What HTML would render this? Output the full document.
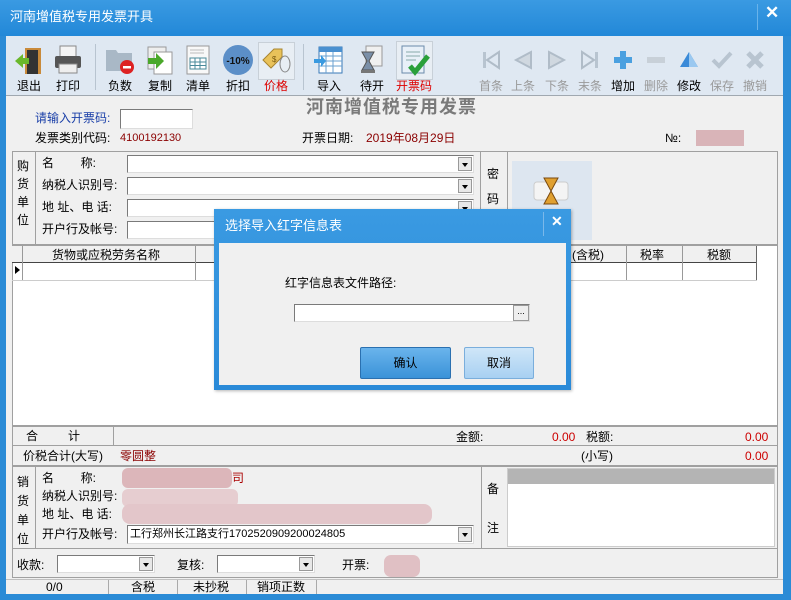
<!DOCTYPE html>
<html><head><meta charset="utf-8"><style>
*{margin:0;padding:0;box-sizing:border-box}
body{width:791px;height:600px;overflow:hidden;background:#2b8bd6;font-family:"Liberation Sans","Noto Sans CJK SC",sans-serif;font-size:12px;color:#000;position:relative}
.a{position:absolute}
.t{position:absolute;white-space:nowrap;line-height:14px}
.tb{position:absolute;top:80px;width:40px;text-align:center;font-size:12px;line-height:12px}
.ic{position:absolute;top:44px;width:32px;height:32px}
.inp{position:absolute;background:#fff;border:1px solid #7a7a7a;border-right-color:#ddd;border-bottom-color:#ddd}
.dd{position:absolute;right:1px;top:1px;width:14px;bottom:1px;background:#e8e8e8;border:1px solid #999}
.dd:after{content:"";position:absolute;left:3px;top:5px;border:3px solid transparent;border-top:4px solid #000}
.g{color:#999}
.red{color:#8b0000}
</style></head><body>
<!-- title bar -->
<div class="a" style="left:0;top:0;width:791px;height:36px;background:linear-gradient(#3a9ae2,#2288d8)"></div>
<div class="t" style="left:10px;top:10px;color:#fff;font-size:13px">河南增值税专用发票开具</div>
<div class="a" style="left:757px;top:4px;width:1px;height:26px;background:#6ab3ea"></div>
<div class="t" style="left:765px;top:6px;color:#fff;font-size:17px;font-weight:bold">✕</div>
<!-- content -->
<div class="a" style="left:6px;top:36px;width:777px;height:558px;background:#f0f0f0"></div>
<div class="a" style="left:6px;top:36px;width:777px;height:60px;background:#dfe8f2;border-bottom:1px solid #a0a8b0"></div>
<div class="a" style="left:95px;top:44px;width:1px;height:46px;background:#b8c4d0"></div>
<div class="a" style="left:303px;top:44px;width:1px;height:46px;background:#b8c4d0"></div>
<!-- icons -->
<svg class="ic" style="left:13px" viewBox="0 0 32 32"><rect x="12" y="4" width="16" height="26" fill="#c98a3a"/><rect x="14" y="6" width="11" height="24" fill="#333"/><path d="M2 17 L10 10 V14 H16 V20 H10 V24Z" fill="#6ab82c"/></svg>
<svg class="ic" style="left:52px" viewBox="0 0 32 32"><rect x="8" y="2" width="16" height="12" fill="#f4f4f4" stroke="#888"/><rect x="3" y="12" width="26" height="12" rx="2" fill="#555"/><rect x="7" y="20" width="18" height="9" fill="#eee" stroke="#888"/></svg>
<svg class="ic" style="left:104px" viewBox="0 0 32 32"><path d="M2 6 H12 L14 9 H28 V27 H2Z" fill="#a9b8c6"/><circle cx="23" cy="23" r="7" fill="#d22"/><rect x="19" y="22" width="8" height="2.5" fill="#fff"/></svg>
<svg class="ic" style="left:144px" viewBox="0 0 32 32"><rect x="4" y="3" width="18" height="22" fill="#eee" stroke="#999"/><rect x="10" y="8" width="18" height="22" fill="#fff" stroke="#999"/><path d="M4 14 H12 V9 L20 17 L12 25 V20 H4Z" fill="#4aa82a"/></svg>
<svg class="ic" style="left:182px" viewBox="0 0 32 32"><rect x="5" y="2" width="22" height="28" fill="#f8f8f8" stroke="#999"/><rect x="8" y="14" width="16" height="11" fill="#fff" stroke="#4a8a9a"/><path d="M8 18H24M8 21.5H24M13 14V25M18 14V25" stroke="#4a8a9a"/><path d="M8 6H22M8 9H22" stroke="#bbb"/></svg>
<svg class="ic" style="left:222px" viewBox="0 0 32 32"><circle cx="16" cy="16" r="15" fill="#5c8fc8"/><text x="16" y="20" font-size="10" font-weight="bold" text-anchor="middle" fill="#111" font-family="Liberation Sans">-10%</text></svg>
<div class="a" style="left:258px;top:42px;width:37px;height:38px;background:#e8eef4;border:1px solid #c8d0d8"></div>
<svg class="ic" style="left:260px" viewBox="0 0 32 32"><path d="M3 16 L14 5 H22 V13 L11 24Z" fill="#e9c25a" stroke="#a88530"/><ellipse cx="25" cy="20" rx="5" ry="8" fill="none" stroke="#888"/><text x="12" y="18" font-size="8" fill="#7a5a10">$</text></svg>
<svg class="ic" style="left:313px" viewBox="0 0 32 32"><rect x="6" y="3" width="23" height="26" fill="#fff" stroke="#3a7ab8"/><rect x="6" y="3" width="23" height="5" fill="#4a90d0"/><path d="M6 12H29M6 17H29M6 22H29M13 8V29M20 8V29" stroke="#6aa0d0"/><path d="M1 15 H8 V11 L13 17 L8 23 V19 H1Z" fill="#3a9ae0"/></svg>
<svg class="ic" style="left:356px" viewBox="0 0 32 32"><rect x="10" y="2" width="16" height="20" fill="#f0f0f0" stroke="#999"/><path d="M6 8 H18 L13 17 L18 26 H6 L11 17Z" fill="#7a8fa8" stroke="#555"/><rect x="5" y="26" width="14" height="3" fill="#777"/></svg>
<div class="a" style="left:396px;top:41px;width:37px;height:39px;background:#e8eef4;border:1px solid #c8d0d8"></div>
<svg class="ic" style="left:398px" viewBox="0 0 32 32"><rect x="4" y="2" width="22" height="27" fill="#e8f0f8" stroke="#6a8aaa"/><path d="M8 8H22M8 12H22M8 16H18" stroke="#8aa"/><path d="M12 22 L17 28 L30 12" stroke="#2aa03a" stroke-width="5" fill="none"/></svg>
<!-- right icons -->
<svg class="ic" style="left:481px;top:50px;width:20px;height:20px" viewBox="0 0 20 20"><rect x="2" y="2" width="3" height="16" fill="#b8c4d0"/><path d="M18 2 L6 10 L18 18Z" fill="none" stroke="#b0bcc8" stroke-width="2"/></svg>
<svg class="ic" style="left:513px;top:50px;width:20px;height:20px" viewBox="0 0 20 20"><path d="M18 2 L3 10 L18 18Z" fill="#d0d8e0" stroke="#b0bcc8" stroke-width="2"/></svg>
<svg class="ic" style="left:547px;top:50px;width:20px;height:20px" viewBox="0 0 20 20"><path d="M2 2 L17 10 L2 18Z" fill="#d0d8e0" stroke="#b0bcc8" stroke-width="2"/></svg>
<svg class="ic" style="left:580px;top:50px;width:20px;height:20px" viewBox="0 0 20 20"><rect x="15" y="2" width="3" height="16" fill="#b8c4d0"/><path d="M2 2 L14 10 L2 18Z" fill="none" stroke="#b0bcc8" stroke-width="2"/></svg>
<svg class="ic" style="left:613px;top:50px;width:20px;height:20px" viewBox="0 0 20 20"><path d="M7 1H13V7H19V13H13V19H7V13H1V7H7Z" fill="#4aa0e0"/></svg>
<svg class="ic" style="left:646px;top:50px;width:20px;height:20px" viewBox="0 0 20 20"><rect x="1" y="7" width="18" height="6" fill="#c8d0d8"/></svg>
<svg class="ic" style="left:679px;top:50px;width:20px;height:20px" viewBox="0 0 20 20"><path d="M10 2 L19 17 H1Z" fill="#3a8ad8"/><path d="M10 2 L19 17 H10Z" fill="#9ac8f0"/></svg>
<svg class="ic" style="left:711px;top:50px;width:22px;height:20px" viewBox="0 0 22 20"><path d="M2 10 L8 16 L20 3" stroke="#b8c4d0" stroke-width="4" fill="none"/></svg>
<svg class="ic" style="left:745px;top:50px;width:20px;height:20px" viewBox="0 0 20 20"><path d="M3 3L17 17M17 3L3 17" stroke="#b8c4d0" stroke-width="5"/></svg>
<div class="tb" style="left:9px">退出</div><div class="tb" style="left:48px">打印</div>
<div class="tb" style="left:100px">负数</div><div class="tb" style="left:140px">复制</div>
<div class="tb" style="left:178px">清单</div><div class="tb" style="left:218px">折扣</div>
<div class="tb" style="left:256px;color:#d00">价格</div><div class="tb" style="left:309px">导入</div>
<div class="tb" style="left:352px">待开</div><div class="tb" style="left:390px;width:48px;color:#d00">开票码</div>
<div class="tb g" style="left:471px">首条</div><div class="tb g" style="left:503px">上条</div>
<div class="tb g" style="left:537px">下条</div><div class="tb g" style="left:570px">末条</div>
<div class="tb" style="left:603px">增加</div><div class="tb g" style="left:636px">删除</div>
<div class="tb" style="left:669px">修改</div><div class="tb g" style="left:702px">保存</div>
<div class="tb g" style="left:735px">撤销</div>
<!-- header -->
<div class="t" style="left:306px;top:97px;font-size:18px;line-height:20px;font-weight:bold;color:#7a7a7a;letter-spacing:1px">河南增值税专用发票</div>
<div class="t" style="left:35px;top:111px;color:#1a3fa8">请输入开票码:</div>
<div class="inp" style="left:120px;top:109px;width:73px;height:20px"></div>
<div class="t" style="left:35px;top:131px">发票类别代码:</div>
<div class="t red" style="left:120px;top:131px;font-size:11px">4100192130</div>
<div class="t" style="left:302px;top:131px">开票日期:</div>
<div class="t red" style="left:366px;top:131px">2019年08月29日</div>
<div class="t" style="left:665px;top:131px">№:</div>
<div class="a" style="left:696px;top:130px;width:48px;height:16px;background:#d9b4b8"></div>
<!-- buyer -->
<div class="a" style="left:12px;top:151px;width:766px;height:94px;border:1px solid #a0a0a0"></div>
<div class="a" style="left:35px;top:151px;width:1px;height:94px;background:#a0a0a0"></div>
<div class="a" style="left:480px;top:151px;width:1px;height:94px;background:#a0a0a0"></div>
<div class="a" style="left:507px;top:151px;width:1px;height:94px;background:#a0a0a0"></div>
<div class="t" style="left:17px;top:157px;width:14px;white-space:normal;line-height:18px">购货单位</div>
<div class="t" style="left:487px;top:162px;width:14px;white-space:normal;line-height:25px">密码</div>
<div class="t" style="left:42px;top:156px">名&nbsp;&nbsp;&nbsp;&nbsp;&nbsp;&nbsp;&nbsp;&nbsp;称:</div>
<div class="t" style="left:42px;top:178px">纳税人识别号:</div>
<div class="t" style="left:42px;top:200px">地 址、电 话:</div>
<div class="t" style="left:42px;top:222px">开户行及帐号:</div>
<div class="inp" style="left:127px;top:155px;width:347px;height:18px"><div class="dd"></div></div>
<div class="inp" style="left:127px;top:177px;width:347px;height:18px"><div class="dd"></div></div>
<div class="inp" style="left:127px;top:199px;width:347px;height:18px"><div class="dd"></div></div>
<div class="inp" style="left:127px;top:221px;width:347px;height:18px"></div>
<div class="a" style="left:512px;top:161px;width:80px;height:79px;background:#dde6f0"></div>
<svg class="a" style="left:533px;top:177px;width:36px;height:28px" viewBox="0 0 36 28"><rect x="1" y="5" width="34" height="18" rx="3" fill="#f4f4f4" stroke="#ccc"/><path d="M11 1H25L18 14L25 27H11L18 14Z" fill="#e0a030" stroke="#7a4a10"/></svg>
<!-- table -->
<div class="a" style="left:12px;top:245px;width:766px;height:181px;background:#fff;border:1px solid #a0a0a0"></div>
<div class="a" style="left:12px;top:246px;width:744px;height:17px;background:#f0f0f0;border-bottom:1px solid #444"></div>
<div class="a" style="left:22px;top:246px;width:1px;height:34px;background:#999"></div>
<div class="a" style="left:195px;top:246px;width:1px;height:34px;background:#999"></div>
<div class="a" style="left:626px;top:246px;width:1px;height:34px;background:#999"></div>
<div class="a" style="left:682px;top:246px;width:1px;height:34px;background:#999"></div>
<div class="a" style="left:756px;top:246px;width:1px;height:34px;background:#666"></div>
<div class="a" style="left:12px;top:280px;width:745px;height:1px;background:#ccc"></div>
<div class="t" style="left:52px;top:248px">货物或应税劳务名称</div>
<div class="t" style="left:572px;top:248px">(含税)</div>
<div class="t" style="left:640px;top:248px">税率</div>
<div class="t" style="left:707px;top:248px">税额</div>
<div class="a" style="left:15px;top:266px;border:4px solid transparent;border-left:5px solid #000"></div>
<!-- totals -->
<div class="a" style="left:12px;top:426px;width:766px;height:40px;border:1px solid #a0a0a0"></div>
<div class="a" style="left:12px;top:445px;width:766px;height:1px;background:#a0a0a0"></div>
<div class="a" style="left:113px;top:426px;width:1px;height:20px;background:#a0a0a0"></div>
<div class="t" style="left:26px;top:429px">合&nbsp;&nbsp;&nbsp;&nbsp;&nbsp;&nbsp;&nbsp;&nbsp;&nbsp;计</div>
<div class="t" style="left:456px;top:430px">金额:</div>
<div class="t red" style="left:552px;top:430px;color:#c00">0.00</div>
<div class="t" style="left:586px;top:430px">税额:</div>
<div class="t" style="left:745px;top:430px;color:#c00">0.00</div>
<div class="t" style="left:23px;top:449px">价税合计(大写)</div>
<div class="t red" style="left:120px;top:449px">零圆整</div>
<div class="t" style="left:581px;top:449px">(小写)</div>
<div class="t" style="left:745px;top:449px;color:#c00">0.00</div>
<!-- seller -->
<div class="a" style="left:12px;top:466px;width:766px;height:83px;border:1px solid #a0a0a0"></div>
<div class="a" style="left:35px;top:466px;width:1px;height:83px;background:#a0a0a0"></div>
<div class="a" style="left:481px;top:466px;width:1px;height:83px;background:#a0a0a0"></div>
<div class="t" style="left:17px;top:473px;width:14px;white-space:normal;line-height:19px">销货单位</div>
<div class="t" style="left:42px;top:471px">名&nbsp;&nbsp;&nbsp;&nbsp;&nbsp;&nbsp;&nbsp;&nbsp;称:</div>
<div class="t" style="left:42px;top:489px">纳税人识别号:</div>
<div class="t" style="left:42px;top:507px">地 址、电 话:</div>
<div class="t" style="left:42px;top:527px">开户行及帐号:</div>
<div class="a" style="left:122px;top:468px;width:110px;height:20px;background:#dcb6ba;border-radius:6px"></div>
<div class="t red" style="left:232px;top:471px;color:#a00">司</div>
<div class="a" style="left:122px;top:489px;width:116px;height:18px;background:#e6cdd0;border-radius:6px"></div>
<div class="a" style="left:122px;top:504px;width:310px;height:20px;background:#e3c6ca;border-radius:8px"></div>
<div class="inp" style="left:127px;top:525px;width:347px;height:19px"><div class="dd"></div></div>
<div class="t" style="left:130px;top:527px;font-size:11px">工行郑州长江路支行17025209092000248­05</div>
<div class="t" style="left:487px;top:482px">备</div>
<div class="t" style="left:487px;top:521px">注</div>
<div class="a" style="left:507px;top:468px;width:268px;height:79px;background:#fff;border:1px solid #ccc"></div>
<div class="a" style="left:508px;top:469px;width:266px;height:15px;background:#b4b4b4"></div>
<!-- bottom -->
<div class="a" style="left:12px;top:549px;width:766px;height:29px;border:1px solid #a0a0a0;border-top:none"></div>
<div class="t" style="left:17px;top:558px">收款:</div>
<div class="inp" style="left:57px;top:555px;width:98px;height:18px"><div class="dd"></div></div>
<div class="t" style="left:177px;top:558px">复核:</div>
<div class="inp" style="left:217px;top:555px;width:98px;height:18px"><div class="dd"></div></div>
<div class="t" style="left:342px;top:558px">开票:</div>
<div class="a" style="left:384px;top:555px;width:36px;height:22px;background:#e0c0c4;border-radius:7px"></div>
<div class="a" style="left:6px;top:579px;width:777px;height:1px;background:#c0c0c0"></div>
<div class="a" style="left:108px;top:580px;width:1px;height:14px;background:#aaa"></div>
<div class="a" style="left:177px;top:580px;width:1px;height:14px;background:#aaa"></div>
<div class="a" style="left:246px;top:580px;width:1px;height:14px;background:#aaa"></div>
<div class="a" style="left:316px;top:580px;width:1px;height:14px;background:#aaa"></div>
<div class="t" style="left:46px;top:580px">0/0</div>
<div class="t" style="left:131px;top:580px">含税</div>
<div class="t" style="left:193px;top:580px">未抄税</div>
<div class="t" style="left:257px;top:580px">销项正数</div>
<!-- dialog -->
<div class="a" style="left:214px;top:209px;width:357px;height:181px;background:linear-gradient(#3a9ae2,#2a8ad8);box-shadow:1px 1px 3px rgba(0,0,0,.3)"></div>
<div class="t" style="left:225px;top:219px;color:#fff;font-size:13px">选择导入红字信息表</div>
<div class="a" style="left:543px;top:212px;width:1px;height:24px;background:#7ab8ea"></div>
<div class="t" style="left:551px;top:214px;color:#fff;font-size:14px;font-weight:bold">✕</div>
<div class="a" style="left:219px;top:243px;width:347px;height:142px;background:#f0f0f0"></div>
<div class="t" style="left:285px;top:276px">红字信息表文件路径:</div>
<div class="inp" style="left:294px;top:304px;width:236px;height:18px"></div>
<div class="a" style="left:513px;top:305px;width:16px;height:16px;background:#eee;border:1px solid #999;font-size:9px;text-align:center;line-height:10px">...</div>
<div class="a" style="left:360px;top:347px;width:91px;height:32px;background:linear-gradient(#6ab4ec,#3a92d8);border:1px solid #2a70b0;border-radius:2px;text-align:center;line-height:30px">确认</div>
<div class="a" style="left:464px;top:347px;width:70px;height:32px;background:linear-gradient(#cfe6f8,#a8d0f2);border:1px solid #7aaedc;border-radius:2px;text-align:center;line-height:30px">取消</div>
</body></html>
